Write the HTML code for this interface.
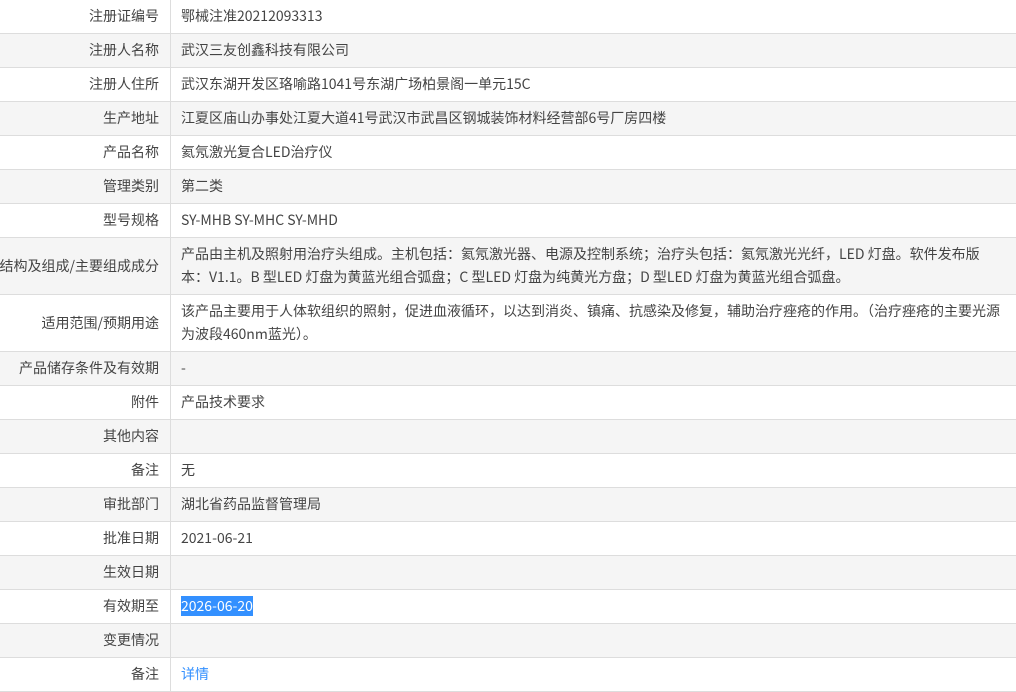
<!DOCTYPE html>
<html><head><meta charset="utf-8"><style>
body{margin:0;width:1016px;height:673px;overflow:hidden;background:#fff;font-family:"Noto Sans CJK SC","Liberation Sans",sans-serif;font-size:14px;color:#333}
.r{display:flex;height:33px;border-bottom:1px solid #ddd;line-height:33px}
.r.g{background:#f5f5f5}
.r.t{height:56px;line-height:23px}
.l{width:159px;padding-right:11px;border-right:1px solid #ddd;text-align:right;white-space:nowrap;direction:rtl;flex:none;color:#444}
.r.t .l{line-height:56px}
.v{padding-left:10px;white-space:nowrap;color:#444}
.r.t .v{padding-top:5px}
.sel{background:#3390ff;color:#fff}
a{color:#3390ff;text-decoration:none}
</style></head><body>
<div class="r"><div class="l">注册证编号</div><div class="v">鄂械注准20212093313</div></div>
<div class="r g"><div class="l">注册人名称</div><div class="v">武汉三友创鑫科技有限公司</div></div>
<div class="r"><div class="l">注册人住所</div><div class="v">武汉东湖开发区珞喻路1041号东湖广场柏景阁一单元15C</div></div>
<div class="r g"><div class="l">生产地址</div><div class="v">江夏区庙山办事处江夏大道41号武汉市武昌区钢城装饰材料经营部6号厂房四楼</div></div>
<div class="r"><div class="l">产品名称</div><div class="v">氦氖激光复合LED治疗仪</div></div>
<div class="r g"><div class="l">管理类别</div><div class="v">第二类</div></div>
<div class="r"><div class="l">型号规格</div><div class="v">SY-MHB SY-MHC SY-MHD</div></div>
<div class="r g t"><div class="l">结构及组成/主要组成成分</div><div class="v">产品由主机及照射用治疗头组成。主机包括：氦氖激光器、电源及控制系统；治疗头包括：氦氖激光光纤，LED 灯盘。软件发布版<br>本：V1.1。B 型LED 灯盘为黄蓝光组合弧盘；C 型LED 灯盘为纯黄光方盘；D 型LED 灯盘为黄蓝光组合弧盘。</div></div>
<div class="r t"><div class="l">适用范围/预期用途</div><div class="v">该产品主要用于人体软组织的照射，促进血液循环，以达到消炎、镇痛、抗感染及修复，辅助治疗痤疮的作用。（治疗痤疮的主要光源<br>为波段460nm蓝光）。</div></div>
<div class="r g"><div class="l">产品储存条件及有效期</div><div class="v">-</div></div>
<div class="r"><div class="l">附件</div><div class="v">产品技术要求</div></div>
<div class="r g"><div class="l">其他内容</div><div class="v"></div></div>
<div class="r"><div class="l">备注</div><div class="v">无</div></div>
<div class="r g"><div class="l">审批部门</div><div class="v">湖北省药品监督管理局</div></div>
<div class="r"><div class="l">批准日期</div><div class="v">2021-06-21</div></div>
<div class="r g"><div class="l">生效日期</div><div class="v"></div></div>
<div class="r"><div class="l">有效期至</div><div class="v"><span class="sel">2026-06-20</span></div></div>
<div class="r g"><div class="l">变更情况</div><div class="v"></div></div>
<div class="r"><div class="l">备注</div><div class="v"><a>详情</a></div></div>
</body></html>
